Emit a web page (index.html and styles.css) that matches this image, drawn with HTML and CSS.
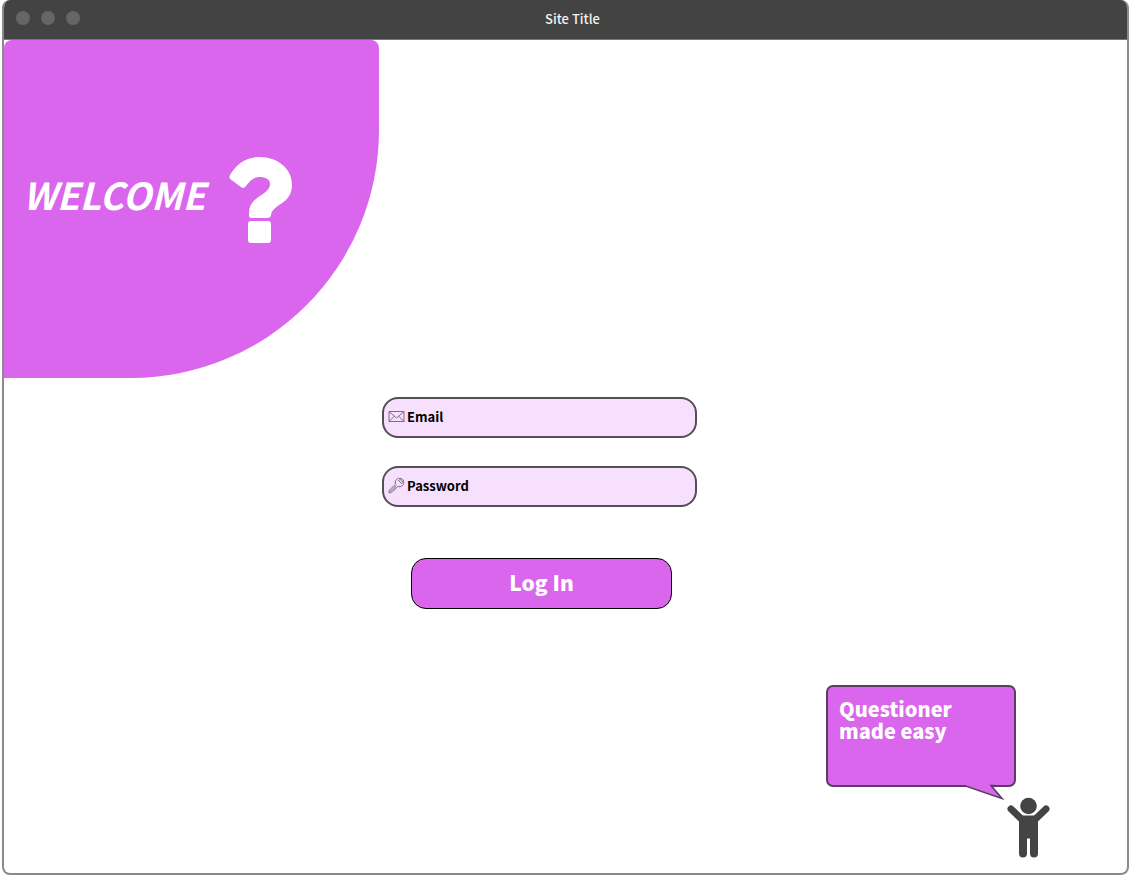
FILE: index.html
```html
<!DOCTYPE html>
<html lang="en">
<head>
<meta charset="utf-8">
<meta name="viewport" content="width=device-width, initial-scale=1">
<title>Site Title</title>
<link rel="stylesheet" href="styles.css">
</head>
<body>
<div class="window">
  <header class="titlebar">
    <div class="dots"><span class="dot"></span><span class="dot"></span><span class="dot"></span></div>
    <div class="site-title">Site Title</div>
  </header>
  <main class="content">
    <section class="hero">
      <h1 class="welcome">WELCOME</h1>
      <svg class="question" viewBox="0 0 64 87" aria-hidden="true">
        <path d="M1 18C8 6 18 0 31 0C48 0 63 11 63 28C63 48 42 47 42 59Q41 61 38 61H22Q20 61 20 58C19 38 41 39 41 27C41 22 36 20 31 20C23 20 20 26 16 30Q14 32 12 30L1 22Q0 20 1 18Z"/>
        <rect x="19" y="64" width="23" height="22" rx="3"/>
      </svg>
    </section>
    <form class="login">
      <label class="field">
        <svg class="field-icon" viewBox="0 0 17 17" aria-hidden="true">
          <path d="M1 3.500H16V13.500H1ZM1 3.500L8.500 10L16 3.500M1 13.500L6.300 8.200M16 13.500L10.700 8.200"/>
        </svg>
        <input class="field-input" type="email" placeholder="Email" aria-label="Email">
      </label>
      <label class="field">
        <svg class="field-icon" viewBox="0 0 17 17" aria-hidden="true">
          <path d="M7.500 7.200C6.500 4 8.500 1.300 11.500 1.300C14 1.300 15.800 3 15.800 5.300C15.800 8.400 13 10.300 9.800 9.500L8.600 10.700L7.500 10.800L7.300 12.200L6 12.400L5.700 13.800L4.400 14L3 15.700H1V13.500L7.500 7.200ZM2 14.500L8.500 8.300"/>
          <path d="M10.500 3.500L13.600 6.600C14.800 5.200 14.400 3.600 13.500 3C12.600 2.400 11.400 2.600 10.500 3.500Z"/>
        </svg>
        <input class="field-input" type="password" placeholder="Password" aria-label="Password">
      </label>
      <button class="submit" type="submit">Log In</button>
    </form>
    <aside class="helper">
      <div class="bubble">
        <p class="bubble-text">Questioner made easy</p>
        <svg class="bubble-tail" viewBox="0 0 42 16" aria-hidden="true">
          <path class="tail-fill" d="M2 0H28V2L38 14L2 2Z"/>
          <path class="tail-line" d="M0 1.500L38 14.500L27 1.500H31"/>
        </svg>
      </div>
      <svg class="person" viewBox="0 0 44 61" aria-hidden="true">
        <circle cx="21.500" cy="9" r="8.300"/>
        <path class="limb" d="M4 12L15.500 23M39 12L27.500 23"/>
        <path d="M12 18.500H31V56.500Q31 60.500 27 60.500Q23 60.500 23 56.500V41.500H20V56.500Q20 60.500 16 60.500Q12 60.500 12 56.500Z"/>
      </svg>
    </aside>
  </main>
</div>
</body>
</html>
```
FILE: styles.css
```css
* {
  box-sizing: border-box;
}

body {
  margin: 0;
  background: #fff;
  font-family: "Noto Sans CJK SC", "Noto Sans", sans-serif;
}

.window {
  display: flex;
  flex-direction: column;
  min-height: calc(100vh - 2px);
  margin: 0 2px 2px;
  border: 2px solid #8a8a8a;
  border-top: 0;
  border-radius: 8px;
  overflow: hidden;
}

.titlebar {
  display: grid;
  grid-template-columns: 1fr auto 1fr;
  align-items: center;
  height: 40px;
  margin: 0 -1px;
  padding: 0 13px;
  background: #434343;
  border-bottom: 1px solid #777;
}

.dots {
  display: flex;
  gap: 11px;
  padding-bottom: 4px;
}

.dot {
  width: 14px;
  height: 14px;
  border-radius: 50%;
  background: #666;
}

.site-title {
  grid-column: 2;
  padding: 0 0 2px 14px;
  color: #f2f2f2;
  font-size: 13px;
  font-weight: 500;
  line-height: 20px;
}

.content {
  display: flex;
  flex: 1;
  flex-direction: column;
}

.hero {
  display: flex;
  align-items: flex-start;
  gap: 24px;
  width: 375px;
  max-width: 100%;
  height: 338px;
  padding: 117px 22px 0 19px;
  background: #db66ee;
  border-radius: 8px 8px 248px 0;
}

.welcome {
  margin: 17px 0 0;
  color: #fff;
  font-size: 37px;
  font-style: italic;
  font-weight: 700;
  line-height: 40px;
}

.question {
  width: 64px;
  height: 87px;
  fill: #fff;
}

.login {
  display: flex;
  flex-direction: column;
  gap: 28px;
  width: 319px;
  max-width: 100%;
  margin: 19px 0 0 378px;
}

.field {
  display: flex;
  align-items: center;
  gap: 2px;
  width: 315px;
  height: 41px;
  padding: 0 4px 2px;
  background: #f7e0fd;
  border: 2px solid #544e56;
  border-radius: 16px;
}

.field-icon {
  flex: none;
  width: 17px;
  height: 17px;
  fill: none;
  stroke: #5c5261;
  stroke-width: 0.8;
}

.field-input {
  flex: 1;
  min-width: 0;
  padding: 0;
  border: 0;
  outline: 0;
  background: transparent;
  color: #000;
  font: 700 13px/20px "Noto Sans CJK SC", "Noto Sans", sans-serif;
}

.field-input::placeholder {
  color: #000;
  opacity: 1;
}

.submit {
  align-self: center;
  width: 261px;
  height: 51px;
  margin-top: 23px;
  padding: 0 0 4px;
  background: #db66ee;
  border: 1px solid #000;
  border-radius: 15px;
  color: #fff;
  font: 900 21px/28px "Noto Sans CJK SC", "Noto Sans", sans-serif;
}

.helper {
  display: flex;
  align-items: flex-end;
  align-self: flex-end;
  margin: auto 76px 15px 0;
  padding-top: 40px;
}

.bubble {
  position: relative;
  width: 190px;
  height: 102px;
  margin: 0 -9px 71px 0;
  padding: 11px;
  background: #db66ee;
  border: 2px solid #5a3e60;
  border-radius: 7px;
}

.bubble-text {
  margin: 0;
  color: #fff;
  font-size: 20px;
  font-weight: 900;
  line-height: 22px;
}

.bubble-tail {
  position: absolute;
  right: 8px;
  bottom: -15px;
  width: 42px;
  height: 16px;
}

.tail-fill {
  fill: #db66ee;
}

.tail-line {
  fill: none;
  stroke: #5a3e60;
  stroke-width: 1.6;
}

.person {
  width: 44px;
  height: 61px;
  fill: #444;
}

.limb {
  stroke: #444;
  stroke-width: 7;
  stroke-linecap: round;
}
```
